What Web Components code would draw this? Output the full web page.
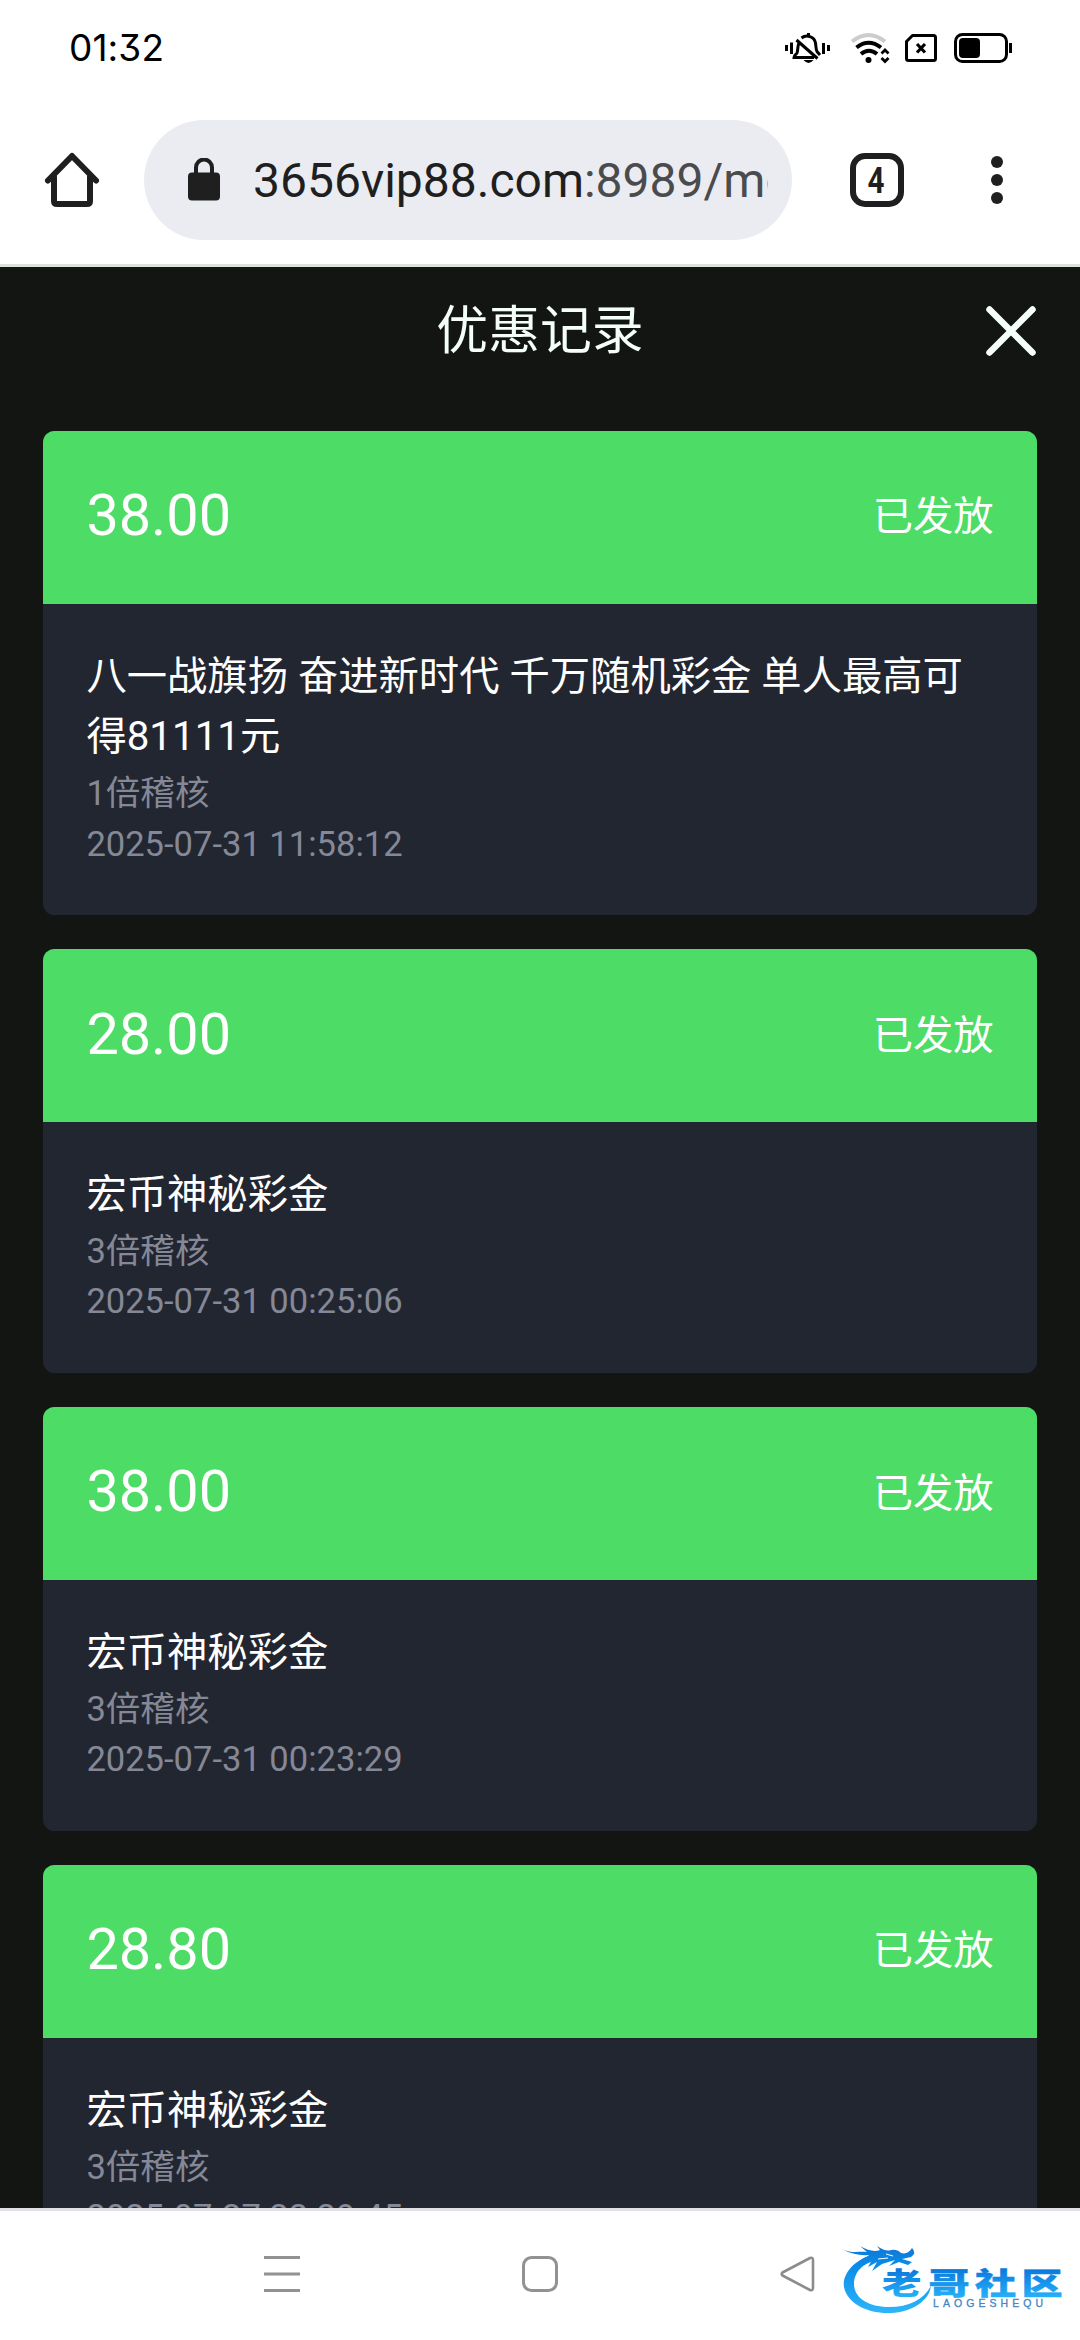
<!DOCTYPE html>
<html lang="zh-CN">
<head>
<meta charset="utf-8">
<title>优惠记录</title>
<style>
html,body{margin:0;height:100%;background:#fff}
body{font-family:Roboto,"Noto Sans CJK SC",sans-serif;overflow:hidden}
</style>
</head>
<body>
<phone-screen>
  <status-bar time="01:32"></status-bar>
  <browser-toolbar tabs="4">3656vip88.com<span slot="rest">:8989/mobile</span></browser-toolbar>
  <record-page heading="优惠记录">
    <bonus-card amount="38.00" state="已发放" audit="1倍稽核" time="2025-07-31 11:58:12">八一战旗扬 奋进新时代 千万随机彩金 单人最高可得81111元</bonus-card>
    <bonus-card amount="28.00" state="已发放" audit="3倍稽核" time="2025-07-31 00:25:06">宏币神秘彩金</bonus-card>
    <bonus-card amount="38.00" state="已发放" audit="3倍稽核" time="2025-07-31 00:23:29">宏币神秘彩金</bonus-card>
    <bonus-card amount="28.80" state="已发放" audit="3倍稽核" time="2025-07-27 22:29:45">宏币神秘彩金</bonus-card>
  </record-page>
  <nav-bar><community-logo></community-logo></nav-bar>
</phone-screen>
<script>
function define(name, html){
  customElements.define(name, class extends HTMLElement{
    connectedCallback(){
      if(this.shadowRoot) return;
      const root = this.attachShadow({mode:'open'});
      root.innerHTML = html;
      root.querySelectorAll('[data-attr]').forEach(n => { n.textContent = this.getAttribute(n.dataset.attr) || ''; });
    }
  });
}

define('phone-screen', `<style>
:host{display:flex;flex-direction:column;width:1080px;height:2340px;overflow:hidden;background:#fff}
</style><slot></slot>`);

define('status-bar', `<style>
:host{display:flex;flex:none;justify-content:space-between;align-items:center;height:96px;padding:0 64px 0 69px;box-sizing:border-box;color:#000}
.time{font:400 37px/44px Inter,Roboto,sans-serif;font-feature-settings:"cv09";letter-spacing:.1px}
svg{display:block;width:232px;height:40px}
</style>
<span class="time" data-attr="time"></span>
<svg viewBox="783 28 232 40" fill="none" stroke="#000">
  <path stroke-width="3" d="M785.5 45v6M790.5 42.500v11.500M822.500 43v11M827.500 45v6" />
  <path stroke-width="3" d="M798.500 42c-2 2-1.500 9-2.500 11-1 1.500-3 2-3 4.500h20M800.500 38c5-4 13-1.500 14 5 .5 4 .5 7 1.500 8.500l3 3.500M807.500 33v4M795.500 40l21 18.500"/>
  <path fill="#000" stroke="none" d="M802.500 60h10q-2.500 3-5 3t-5-3z"/>
  <path stroke="#ccc" stroke-width="4" d="M851 41.500q16.500-13 33 0"/>
  <path stroke-width="4" d="M855.500 47.500q12-9.500 24.500 0M860 54q8-6.500 16 0"/>
  <circle cx="867.500" cy="60" r="3" fill="#000" stroke="none"/>
  <path stroke-width="2.800" d="M880.500 53.500l3.500-3.500 3.500 3.500M880.500 58l3.500 3.500 3.500-3.500"/>
  <path stroke-width="3" stroke-linejoin="round" d="M911.500 35.500h21q2 0 2 2v21q0 2-2 2h-25q-2 0-2-2v-17z"/>
  <path stroke-width="3.200" d="M916 44l8 8.500M924 44l-8 8.500"/>
  <rect x="954.500" y="34.500" width="51" height="27" rx="7" stroke-width="3"/>
  <rect x="958" y="38" width="21" height="20" rx="4" fill="#000" stroke="none"/>
  <path stroke-width="3" d="M1009.500 43v10"/>
</svg>`);

define('browser-toolbar', `<style>
:host{display:flex;flex:none;align-items:flex-start;height:171px;padding:24px 66px 3px 42px;box-sizing:border-box;border-bottom:3px solid #dfe1df;color:#1f1f1f}
svg{display:block;flex:none}
.pill{display:flex;align-items:center;box-sizing:border-box;width:648px;height:120px;margin:0 54px 0 42px;padding:0 24px 0 44px;border-radius:60px;background:#ebecf1}
.home,.menu{margin-top:30px}
.url{flex:1;min-width:0;margin:2px 0 0 31px;overflow:hidden;white-space:nowrap;font:400 48px/60px Roboto,sans-serif}
.rest{color:#4a4b4d}
.tabs{display:flex;align-items:center;justify-content:center;flex:none;box-sizing:border-box;width:54px;height:54px;margin:33px 0 0 4px;border:6px solid #1f1f1f;border-radius:15px}
.tabs b{font:700 37px/42px Roboto,sans-serif;transform:translate(-.5px,1px) scaleX(.8)}
.menu{margin-left:87px}
</style>
<svg class="home" width="60" height="60" viewBox="42 150 60 60" fill="none" stroke="#1f1f1f" stroke-width="6" stroke-linecap="round" stroke-linejoin="round"><path d="M48 180.500l24-24.500 24 24.500M54 177v24q0 3 3 3h30q3 0 3-3v-24"/></svg>
<div class="pill">
  <svg width="34" height="44" viewBox="0 0 34 44"><rect y="14.500" width="32" height="28" rx="4" fill="#1f1f1f"/><path d="M8 16v-6.500a8 8 0 0 1 16 0V16" fill="none" stroke="#1f1f1f" stroke-width="4"/></svg>
  <div class="url"><slot></slot><span class="rest"><slot name="rest"></slot></span></div>
</div>
<div class="tabs"><b data-attr="tabs"></b></div>
<svg class="menu" width="12" height="60" viewBox="0 0 12 60" fill="#1f1f1f"><circle cx="6" cy="12" r="6"/><circle cx="6" cy="30" r="6"/><circle cx="6" cy="48" r="6"/></svg>`);

define('record-page', `<style>
:host{display:flex;flex-direction:column;flex:1;min-height:0;overflow:hidden;background:#131512}
header{display:grid;grid-template-columns:1fr auto 1fr;align-items:center;flex:none;height:120px;padding:0 43px;color:#f5fff9}
h1{grid-column:2;margin:9px 0 0;font:400 51.840px/78px Roboto,"Noto Sans CJK SC",sans-serif}
svg{justify-self:end;margin-top:7px}
main{display:flex;flex-direction:column;gap:34.560px;padding:44px 43.200px 0}
</style>
<header><h1 data-attr="heading"></h1><svg width="52" height="52" viewBox="0 0 52 52" stroke="#f5fff9" stroke-width="6.500" stroke-linecap="round"><path d="M4.500 4.500l43 43M47.500 4.500l-43 43"/></svg></header>
<main><slot></slot></main>`);

define('bonus-card', `<style>
:host{display:block;flex:none;border-radius:11.500px;overflow:hidden;background:#222631;color:#fff}
.top{display:flex;justify-content:space-between;align-items:center;height:172.800px;padding:0 43.200px;box-sizing:border-box;background:#4ddc65}
.amount{font-size:57.600px;line-height:86.400px;margin-top:-2px}
.state{font-size:40.320px;line-height:60px}
.body{padding:43.200px;line-height:1.5}
.title{font-size:40.320px}
.meta{font-size:34.560px;color:#858896}
.date{margin:-1.200px 0 1.200px}
</style>
<div class="top"><span class="amount" data-attr="amount"></span><span class="state" data-attr="state"></span></div>
<div class="body"><div class="title"><slot></slot></div><div class="meta" data-attr="audit"></div><div class="meta date" data-attr="time"></div></div>`);

define('nav-bar', `<style>
:host{position:relative;display:flex;flex:none;align-items:center;height:132px;padding:0 263px;box-sizing:border-box;border-top:3px solid #e1e1e5;background:#fff;justify-content:space-between}
svg{display:block;margin-bottom:3px}
::slotted(*){position:absolute;left:834px;top:30px}
</style>
<svg width="38" height="38" viewBox="0 0 38 38" stroke="#929292" stroke-width="3"><path d="M1 2.500h36M1 19h36M1 35.500h36"/></svg>
<svg width="38" height="38" viewBox="0 0 38 38" fill="none" stroke="#929292" stroke-width="3"><rect x="2.500" y="2.500" width="33" height="33" rx="8"/></svg>
<svg width="38" height="38" viewBox="0 0 38 38" fill="none" stroke="#8c8c8c" stroke-width="2.600" stroke-linejoin="round"><path d="M3.500 17.500Q2 19 3.500 20.500L31 35Q34 36 34 33V5Q34 2 31 3Z"/></svg>
<slot></slot>`);

define('community-logo', `<style>
:host{display:block}
svg{display:block}
.cn{font:900 30px "Noto Sans CJK SC",sans-serif}
.en{font:400 10.500px "Liberation Sans",sans-serif;fill:#3f86c8;stroke:#3f86c8;stroke-width:.3px}
</style>
<svg width="236" height="84" viewBox="834 2241 236 84">
  <defs>
    <linearGradient id="blue" x1="0" y1="2246" x2="0" y2="2312" gradientUnits="userSpaceOnUse"><stop offset="0" stop-color="#1275d2"/><stop offset=".25" stop-color="#078ae8"/><stop offset="1" stop-color="#2cb4fa"/></linearGradient>
    <linearGradient id="text" x1="0" y1="-26" x2="0" y2="3" gradientUnits="userSpaceOnUse"><stop offset="0" stop-color="#0877dc"/><stop offset="1" stop-color="#26b0f8"/></linearGradient>
  </defs>
  <path fill="url(#blue)" d="M874 2254C853 2260 842 2275 844 2287C847 2303 867 2314 891 2313C912 2312 929 2301 931 2286C923 2300 909 2307 889 2307C867 2307 854 2297 854 2284C854 2273 862 2262 880 2260Z"/>
  <path fill="url(#blue)" d="M842 2249C852 2254 859 2251 867 2252L860 2246Q872 2253 880 2250L877 2246Q886 2252 891 2250Q897 2249 901 2253Q908 2255 912 2248Q917 2253 911 2257L902 2259L912 2262L908 2265L899 2262L889 2266L895 2260L882 2264L872 2271L877 2262L868 2267L872 2260L861 2263L869 2255Q854 2256 842 2249Z"/>
  <path fill="none" stroke="#fff" stroke-width="1" d="M886 2254l7 2M878 2259l10-1"/>
  <g class="cn" fill="url(#text)">
    <text transform="translate(882 2294) scale(1.320 1)" stroke="#fff" stroke-width="1" paint-order="stroke">老</text>
    <text transform="translate(928.500 2294) scale(1.370 1)" stroke="url(#text)" stroke-width=".5">哥</text>
    <text transform="translate(975 2294) scale(1.370 1)" stroke="url(#text)" stroke-width=".5">社</text>
    <text transform="translate(1021.500 2294) scale(1.370 1)" stroke="url(#text)" stroke-width=".5">区</text>
  </g>
  <text class="en" x="933" y="2306.500" textLength="110">LAOGESHEQU</text>
</svg>`);
</script>
</body>
</html>
